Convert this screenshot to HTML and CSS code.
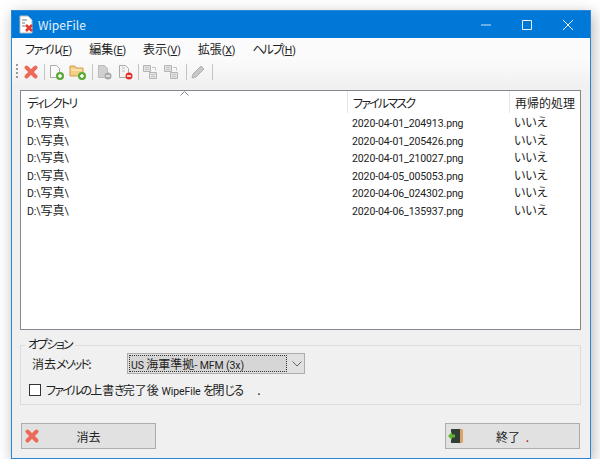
FILE: index.html
```html
<!DOCTYPE html>
<html lang="ja">
<head>
    <meta charset="UTF-8">
    <meta name="viewport" content="width=device-width, initial-scale=1.0">
    <title>WipeFile</title>
    <link rel="stylesheet" href="styles.css">
</head>
<body>

<div class="window">
    <!-- Title bar -->
    <div class="titlebar">
        <svg class="app-icon" width="18" height="20" viewBox="0 0 18 20">
            <path d="M2 1h8l4 4v13H2z" fill="#fff" stroke="#bbb"/>
            <path d="M4 5h5M4 8h3M4 11h3" stroke="#777" fill="none"/>
            <path d="M8 10l6 6m0-6l-6 6" stroke="#e03a30" stroke-width="2.6"/>
        </svg>
        <span class="title">WipeFile</span>
        <div class="caption-buttons">
            <svg width="12" height="12" viewBox="0 0 12 12"><path d="M1 6h10" stroke="#cfe4f7"/></svg>
            <svg width="12" height="12" viewBox="0 0 12 12"><path d="M1.500 1.500h9v9h-9z" stroke="#e8f2fb" fill="none"/></svg>
            <svg width="12" height="12" viewBox="0 0 12 12"><path d="M1 1l10 10M11 1L1 11" stroke="#e8f2fb"/></svg>
        </div>
    </div>

    <!-- Menu -->
    <div class="menubar">
        <span class="menu-item"><span class="kana">ファイル</span><span class="latin">(<u>F</u>)</span></span>
        <span class="menu-item">編集<span class="latin">(<u>E</u>)</span></span>
        <span class="menu-item">表示<span class="latin">(<u>V</u>)</span></span>
        <span class="menu-item">拡張<span class="latin">(<u>X</u>)</span></span>
        <span class="menu-item"><span class="kana">ヘルプ</span><span class="latin">(<u>H</u>)</span></span>
    </div>

    <!-- Toolbar -->
    <div class="toolbar">
        <span class="grip"></span>
        <svg class="tool" width="16" height="16" viewBox="0 0 16 16"><path d="M3.500 3.500l9 9m0-9l-9 9" stroke="#ee6a58" stroke-width="4" stroke-linecap="round"/></svg>
        <span class="sep"></span>
        <svg class="tool" width="16" height="16" viewBox="0 0 16 16"><path d="M2.500 1.500h6l3 3v9h-9z" fill="#fafafa" stroke="#aaa"/><circle cx="12" cy="12" r="4" fill="#5aa838"/><path d="M10 12h4M12 10v4" stroke="#fff" stroke-width="1.500"/></svg>
        <svg class="tool" width="18" height="16" viewBox="0 0 18 16"><path d="M1 2h5l1 2h7v8H1z" fill="#f5cf84" stroke="#cf9d4a"/><path d="M2 6h11" stroke="#fff3d0"/><circle cx="13" cy="12" r="4" fill="#5aa838"/><path d="M11 12h4M13 10v4" stroke="#fff" stroke-width="1.500"/></svg>
        <span class="sep"></span>
        <svg class="tool" width="16" height="16" viewBox="0 0 16 16"><path d="M2.500 1.500h6l3 3v9h-9z" fill="#d0d0d0" stroke="#bbb"/><circle cx="12" cy="12" r="3.500" fill="#a8a8a8"/><path d="M10 12h4" stroke="#eee" stroke-width="1.500"/></svg>
        <svg class="tool" width="16" height="16" viewBox="0 0 16 16"><path d="M2.500 1.500h6l3 3v9h-9z" fill="#f4f4f4" stroke="#aaa"/><path d="M5 4h3M5 7h3" stroke="#bbb"/><circle cx="12" cy="12" r="3.500" fill="#e0302a"/><path d="M10 12h4" stroke="#fff" stroke-width="1.500"/></svg>
        <span class="sep"></span>
        <svg class="tool" width="16" height="16" viewBox="0 0 16 16"><path d="M1.500 1.500h7v6h-7zM7.500 8.500h7v6h-7z" fill="#e4e4e4" stroke="#b4b4b4"/><path d="M3 3.500h4M3 5.500h4M9 10.500h4M9 12.500h4M10 3.500h3.500v3" fill="none" stroke="#c4c4c4"/></svg>
        <svg class="tool" width="18" height="16" viewBox="0 0 18 16"><path d="M1.500 1.500h7v6h-7zM7.500 8.500h7v6h-7z" fill="#e4e4e4" stroke="#b4b4b4"/><path d="M3 3.500h4M3 5.500h4M9 10.500h4M9 12.500h4M10 3.500h3.500v3" fill="none" stroke="#c4c4c4"/></svg>
        <span class="sep"></span>
        <svg class="tool" width="17" height="16" viewBox="0 0 17 16"><path d="M2 14l1-4 8-8 3 3-8 8z" fill="#c8c8c8" stroke="#b0b0b0"/></svg>
        <span class="sep"></span>
    </div>

    <div class="content">
        <!-- File list -->
        <div class="list">
            <div class="row list-head">
                <span class="col-dir kana">ディレクトリ</span>
                <span class="col-mask kana">ファイルマスク</span>
                <span class="col-rec">再帰的処理</span>
                <svg class="sort-arrow" width="9" height="5" viewBox="0 0 9 5"><path d="M.5 4.500l4-4 4 4" fill="none" stroke="#888"/></svg>
            </div>
            <div class="row"><span class="col-dir"><span class="latin">D:\</span>写真<span class="latin">\</span></span><span class="col-mask file-name">2020-04-01_204913.png</span><span class="col-rec">いいえ</span></div>
            <div class="row"><span class="col-dir"><span class="latin">D:\</span>写真<span class="latin">\</span></span><span class="col-mask file-name">2020-04-01_205426.png</span><span class="col-rec">いいえ</span></div>
            <div class="row"><span class="col-dir"><span class="latin">D:\</span>写真<span class="latin">\</span></span><span class="col-mask file-name">2020-04-01_210027.png</span><span class="col-rec">いいえ</span></div>
            <div class="row"><span class="col-dir"><span class="latin">D:\</span>写真<span class="latin">\</span></span><span class="col-mask file-name">2020-04-05_005053.png</span><span class="col-rec">いいえ</span></div>
            <div class="row"><span class="col-dir"><span class="latin">D:\</span>写真<span class="latin">\</span></span><span class="col-mask file-name">2020-04-06_024302.png</span><span class="col-rec">いいえ</span></div>
            <div class="row"><span class="col-dir"><span class="latin">D:\</span>写真<span class="latin">\</span></span><span class="col-mask file-name">2020-04-06_135937.png</span><span class="col-rec">いいえ</span></div>
        </div>

        <!-- Options -->
        <div class="options">
            <span class="options-label kana">オプション</span>
            <div class="method-row">
                <span class="method-label">消去<span class="kana">メソッド</span>:</span>
                <div class="combo">
                    <span class="combo-value"><span class="latin">US </span>海軍準拠<span class="latin">- MFM (3x)</span></span>
                    <svg class="combo-arrow" width="10" height="6" viewBox="0 0 10 6"><path d="M.5 .5l4.500 4.500 4.500-4.500" fill="none" stroke="#666"/></svg>
                </div>
            </div>
            <div class="check-row">
                <span class="checkbox"></span>
                <span><span class="kana">ファイルの</span>上書<span class="kana">き</span>完了後 <span class="latin">WipeFile</span> <span class="kana">を</span>閉<span class="kana">じる</span></span>
                <span class="check-dot">.</span>
            </div>
        </div>

        <!-- Buttons -->
        <div class="buttons">
            <div class="button">
                <svg class="button-icon" width="16" height="16" viewBox="0 0 16 16"><path d="M3.500 3.500l9 9m0-9l-9 9" stroke="#ee6a58" stroke-width="4" stroke-linecap="round"/></svg>
                <span>消去</span>
            </div>
            <div class="button">
                <svg class="button-icon" width="16" height="16" viewBox="0 0 16 16">
                    <path d="M3 1h9v14H3z" fill="#333d38"/>
                    <path d="M12 .5l3 1v13l-3 1z" fill="#d8a468"/>
                    <path d="M0 8l4-4v2.500h3v3H4V12z" fill="#63b52e"/>
                </svg>
                <span class="exit-label">終了 <span class="exit-dot">.</span></span>
            </div>
        </div>
    </div>
</div>

</body>
</html>
```

FILE: styles.css
```css
body {
    margin: 0;
    background-color: #fff;
    font-family: "Noto Sans CJK JP", sans-serif;
    font-feature-settings: "palt";
    font-size: 12px;
    color: #222;
}
/* the original font has narrow kana and latin */
.kana {
    letter-spacing: -1.8px;
}
.latin, .file-name {
    font-family: Roboto, sans-serif;
    font-size: 10.5px;
    letter-spacing: -0.1px;
}
.file-name {
    line-height: 21px;
}
.window {
    box-sizing: border-box;
    width: 580px;
    height: 449px;
    margin: 10px 0 0 11px;
    background-color: #f0f0f0;
    border: 1px solid #2b86d6;
    box-shadow: 2px 4px 14px rgba(0, 0, 0, 0.3);
}
.titlebar {
    display: flex;
    align-items: center;
    height: 27px;
    background-color: #0078d7;
    color: #e4f0fb;
    padding-left: 6px;
}
.title {
    margin-left: 2px;
}
.caption-buttons {
    display: flex;
    margin-left: auto;
    margin-right: 16px;
    gap: 29px;
}
.menubar {
    display: flex;
    align-items: center;
    height: 21px;
    background-color: #fbfbfb;
    padding-left: 13px;
    gap: 17px;
}
.toolbar {
    display: flex;
    align-items: center;
    height: 26px;
    background: linear-gradient(#fbfbfb, #f1f1f1);
    padding-left: 4px;
}
.grip {
    width: 2px;
    height: 16px;
    margin-right: 5px;
    background-image: linear-gradient(#999 50%, transparent 50%);
    background-size: 2px 4px;
}
.tool {
    margin-right: 5px;
    flex: none;
}
.sep {
    width: 1px;
    height: 16px;
    margin-right: 3px;
    background-color: #c4c4c4;
}
.content {
    padding: 5px 9px 0 8px;
}
.list {
    box-sizing: border-box;
    height: 240px;
    background-color: #fff;
    border: 1px solid #828790;
}
.row {
    position: relative;
    display: flex;
    height: 17.6px;
    line-height: 17.6px;
    white-space: nowrap;
}
.list-head {
    height: 22px;
    line-height: 24px;
}
.col-dir {
    box-sizing: border-box;
    width: 326px;
    padding-left: 6px;
}
.col-mask {
    box-sizing: border-box;
    width: 162px;
    padding-left: 5px;
}
.col-rec {
    padding-left: 5px;
}
.list-head .col-mask, .list-head .col-rec {
    border-left: 1px solid #e5e5e5;
}
.sort-arrow {
    position: absolute;
    left: 159px;
    top: 0;
}
.options {
    position: relative;
    box-sizing: border-box;
    height: 60px;
    margin-top: 15px;
    border: 1px solid #dcdcdc;
    padding: 7px 0 0 11px;
}
.options-label {
    position: absolute;
    left: 4px;
    top: -10px;
    padding: 0 3px;
    line-height: 16px;
    background-color: #f0f0f0;
}
.method-row {
    display: flex;
    align-items: center;
}
.method-label {
    width: 95px;
}
.combo {
    box-sizing: border-box;
    display: flex;
    align-items: center;
    width: 178px;
    height: 21px;
    background-color: #e1e1e1;
    border: 1px solid #adadad;
    padding: 1px;
}
.combo-value {
    box-sizing: border-box;
    width: 158px;
    height: 17px;
    line-height: 15px;
    padding-left: 1px;
    background-color: #d6d6d6;
    border: 1px dotted #333;
    white-space: nowrap;
}
.combo-arrow {
    margin-left: 5px;
}
.check-row {
    display: flex;
    align-items: center;
    margin: 7px 0 0 -3px;
    gap: 5px;
}
.checkbox {
    box-sizing: border-box;
    width: 12px;
    height: 12px;
    background-color: #fff;
    border: 1px solid #333;
}
.check-dot {
    margin-left: 10px;
}
.buttons {
    display: flex;
    justify-content: space-between;
    margin: 18px 1px 0;
}
.button {
    box-sizing: border-box;
    position: relative;
    display: flex;
    align-items: center;
    justify-content: center;
    width: 135px;
    height: 26px;
    background-color: #e1e1e1;
    border: 1px solid #adadad;
}
.button-icon {
    position: absolute;
    left: 2px;
    top: 4px;
}
.exit-dot {
    color: #a01030;
    margin-left: 3px;
}
```
